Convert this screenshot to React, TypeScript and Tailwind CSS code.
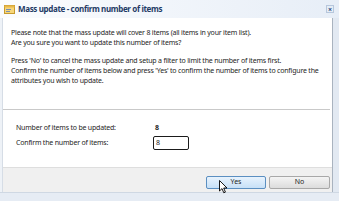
import React from "react";

function DialogIcon() {
  return (
    <svg width="11" height="9" viewBox="0 0 11 9" className="shrink-0">
      <rect x="0.5" y="0.5" width="10" height="8" fill="#f7d67a" stroke="#c79a2e" />
      <rect x="0.5" y="0.5" width="10" height="2" fill="#e9b84a" />
      <rect x="2" y="4" width="5" height="1" fill="#7a8fb0" />
      <rect x="2" y="6" width="4" height="1" fill="#7a8fb0" />
    </svg>
  );
}

function Cursor() {
  return (
    <svg
      width="10"
      height="14"
      viewBox="0 0 10 14"
      className="absolute left-[219px] top-[180px]"
    >
      <path
        d="M0.5 0.5 L0.5 11 L3 8.6 L4.8 12.8 L6.4 12.1 L4.7 8 L8 8 Z"
        fill="#ffffff"
        stroke="#000000"
        strokeWidth="0.9"
        strokeLinejoin="round"
      />
    </svg>
  );
}

export default function App() {
  return (
    <div
      className="relative w-[339px] h-[201px] overflow-hidden bg-[#dde5ef] text-[#1e1e1e]"
      style={{ fontFamily: '"Noto Sans", "Open Sans", sans-serif' }}
    >
      {/* title bar */}
      <div className="flex h-[18px] items-center gap-[3px] bg-gradient-to-r from-[#fbfcfe] to-[#e7eef7] pl-[4px] pr-[5px]">
        <DialogIcon />
        <span className="text-[8px] font-bold text-[#1f3b66] tracking-[-0.35px]">
          Mass update - confirm number of items
        </span>
        <div className="ml-auto flex h-[8px] w-[8px] items-center justify-center border border-[#b7c7dc] bg-[#e4ecf6] text-[7px] font-bold leading-none text-[#2b4a7a]">
          ×
        </div>
      </div>

      <div className="flex h-[174px]">
        <div className="w-[3px] bg-[#eef2f7] border-r border-[#d6dde6]" />
        <div className="flex w-[330px] flex-col border-r border-[#a9b3bf]">
          {/* white content */}
          <div className="flex h-[149px] flex-col bg-white">
            <div className="pl-[8px] pr-[2px] pt-[10px] text-[7px] leading-[10px] tracking-[-0.2px]">
              <p>Please note that the mass update will cover 8 items (all items in your item list).</p>
              <p>Are you sure you want to update this number of items?</p>
              <p className="mt-[8px]">
                Press 'No' to cancel the mass update and setup a filter to limit the number of items first.
              </p>
              <p>
                Confirm the number of items below and press 'Yes' to confirm the number of items to configure the
                attributes you wish to update.
              </p>
            </div>
            <div className="mt-[23px] mr-[2px] border-t border-[#c9c9c9]" />
            <div className="px-[13px] pt-[12px] text-[7px] tracking-[-0.2px]">
              <div className="flex h-[12px] items-center">
                <span className="w-[139px]">Number of items to be updated:</span>
                <span className="font-bold">8</span>
              </div>
              <div className="mt-[2px] flex h-[14px] items-center">
                <span className="w-[137px]">Confirm the number of items:</span>
                <div className="flex h-[14px] w-[36px] items-center rounded-[2px] border border-[#1b1b1b] pl-[2px]">
                  8
                </div>
              </div>
            </div>
          </div>
          {/* footer */}
          <div className="flex h-[25px] items-start justify-end gap-[3px] border-t border-[#dedede] bg-[#f0f0f0] pr-[2px] pt-[8px]">
            <button className="flex h-[13px] w-[60px] items-center justify-center rounded-[2px] border border-[#5b8fc1] bg-gradient-to-b from-[#e8f3fd] to-[#c7e0f7] text-[7px] text-[#1e1e1e]">
              Yes
            </button>
            <button className="flex h-[13px] w-[61px] items-center justify-center rounded-[2px] border border-[#a8a8a8] bg-gradient-to-b from-[#f4f4f4] to-[#dcdcdc] text-[7px] text-[#1e1e1e]">
              No
            </button>
          </div>
        </div>
        <div className="flex-1 bg-[#e2e9f2]" />
      </div>
      <div className="h-[9px] border-t border-[#cfd8e3] bg-[#e6ecf4]" />
      <Cursor />
    </div>
  );
}
